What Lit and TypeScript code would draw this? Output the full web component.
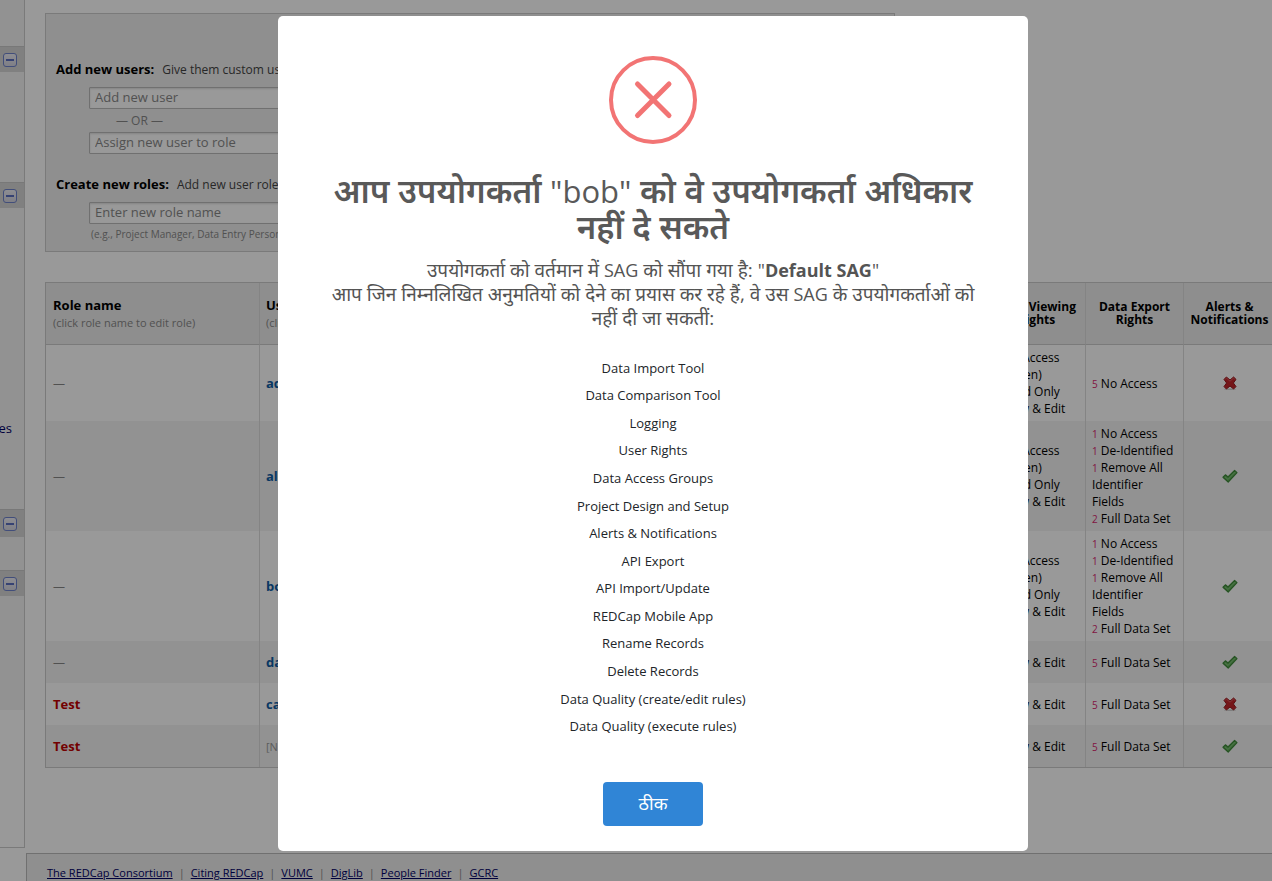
import { LitElement, html, css, svg, nothing } from "lit";
import { customElement, state } from "lit/decorators.js";

type Right = [count: number, label: string];

interface UserRow {
  role: string | null;
  user: string | null;
  viewing: Right[];
  exporting: Right[];
  alerts: boolean;
}

const MIXED_VIEW: Right[] = [
  [1, "No Access (Hidden)"],
  [1, "Read Only"],
  [3, "View & Edit"],
];
const FULL_VIEW: Right[] = [[5, "View & Edit"]];
const MIXED_EXPORT: Right[] = [
  [1, "No Access"],
  [1, "De-Identified"],
  [1, "Remove All Identifier Fields"],
  [2, "Full Data Set"],
];
const FULL_EXPORT: Right[] = [[5, "Full Data Set"]];

const ROWS: UserRow[] = [
  { role: null, user: "admin", viewing: MIXED_VIEW, exporting: [[5, "No Access"]], alerts: false },
  { role: null, user: "alice", viewing: MIXED_VIEW, exporting: MIXED_EXPORT, alerts: true },
  { role: null, user: "bob", viewing: MIXED_VIEW, exporting: MIXED_EXPORT, alerts: true },
  { role: null, user: "dave", viewing: FULL_VIEW, exporting: FULL_EXPORT, alerts: true },
  { role: "Test", user: "carol", viewing: FULL_VIEW, exporting: FULL_EXPORT, alerts: false },
  { role: "Test", user: null, viewing: FULL_VIEW, exporting: FULL_EXPORT, alerts: true },
];

const DENIED = [
  "Data Import Tool",
  "Data Comparison Tool",
  "Logging",
  "User Rights",
  "Data Access Groups",
  "Project Design and Setup",
  "Alerts & Notifications",
  "API Export",
  "API Import/Update",
  "REDCap Mobile App",
  "Rename Records",
  "Delete Records",
  "Data Quality (create/edit rules)",
  "Data Quality (execute rules)",
];

const LINKS = ["The REDCap Consortium", "Citing REDCap", "VUMC", "DigLib", "People Finder", "GCRC"];

const tick = svg`
  <path d="M1 9.2 L3.4 6.8 L6 9 L12.6 2.4 L15 4.6 L6.2 14 Z" fill="#63ad5c" stroke="#3f8a3a" stroke-width="1.2" stroke-linejoin="round"/>
  <path d="M3 9 L6 11.4 L13.4 3.8" fill="none" stroke="#80c579" stroke-width="1"/>`;
const cross = svg`
  <ellipse cx="8" cy="14.2" rx="6" ry="0.8" fill="#d0d0d0"/>
  <path d="M2 4.4 L4.4 2 L8 5 L11.6 2 L14 4.4 L11.4 8 L14 11.6 L11.6 14 L8 11 L4.4 14 L2 11.6 L4.6 8 Z" fill="#c4252b" stroke="#98191e" stroke-width="1" stroke-linejoin="round"/>
  <path d="M3.4 4.2 L4.6 3.2 L8 6.2 L11.4 3.2 L12.6 4.2" fill="none" stroke="#d95a5e" stroke-width="1"/>`;

@customElement("side-menu")
export class SideMenu extends LitElement {
  static styles = css`
    :host { display: flex; flex-direction: column; flex: none; width: 24px; border-right: 1px solid #ccc; border-bottom: 1px solid #ccc; }
    .items { background: #f3f3f3; font-size: 13px; line-height: 18px; display: flex; flex-direction: column; justify-content: center; align-items: flex-end; padding-right: 12px; }
    .items a { color: #000066; text-decoration: none; white-space: nowrap; }
    .first { height: 46px; }
    .second { height: 110px; }
    .third { height: 301px; box-sizing: border-box; padding-top: 138px; }
    .fourth { height: 33px; }
    .fifth { height: 114px; }
    .rest { height: 137px; }
    .head { height: 25px; border-top: 1px solid #c9c9c9; background: #d6d6d6; display: flex; align-items: center; padding-left: 3px; }
    .head.tall { height: 27px; }
    .toggle { width: 14px; height: 14px; padding: 0; border: 1px solid #6f83cc; border-radius: 3px; background: linear-gradient(#ececf4, #d4d4e0); display: flex; align-items: center; justify-content: center; }
    .bar { width: 8px; height: 2px; background: #5a6fc0; }
  `;
  private head(label: string, tall = false) {
    return html`<div class="head ${tall ? "tall" : ""}">
      <button class="toggle" aria-label=${label}><span class="bar"></span></button>
    </div>`;
  }
  render() {
    return html`
      <div class="items first"></div>
      ${this.head("Collapse project menu")}
      <div class="items second"></div>
      ${this.head("Collapse data collection menu")}
      <div class="items third"><a href="#apps">es</a></div>
      ${this.head("Collapse applications menu", true)}
      <div class="items fourth"></div>
      ${this.head("Collapse help menu")}
      <div class="items fifth"></div>
      <div class="rest"></div>
    `;
  }
}

@customElement("add-panel")
export class AddPanel extends LitElement {
  static styles = css`
    :host { display: flex; flex-direction: column; box-sizing: border-box; width: 850px; padding: 45px 10px 7px; border: 1px solid #ccc; background: #eee; font-size: 13px; line-height: 20px; }
    .line { display: flex; align-items: baseline; height: 20px; gap: 8px; color: #444; white-space: nowrap; }
    .line span { font-size: 12px; }
    label { font-weight: 700; color: #000; }
    .fields { display: flex; flex-direction: column; align-items: flex-start; padding-left: 33px; }
    .users { padding-top: 8px; padding-bottom: 20px; }
    .roles { padding-top: 8px; }
    input { box-sizing: border-box; width: 240px; height: 22px; padding: 0 5px 2px; border: 1px solid #bbb; border-radius: 1px; background: #fff; box-shadow: inset 0 1px 2px #ddd; font: inherit; color: #333; }
    input::placeholder { color: #888; opacity: 1; }
    .or { padding-left: 27px; line-height: 23px; font-size: 12px; color: #888; }
    .note { padding-left: 2px; font-size: 10px; color: #888; white-space: nowrap; }
  `;
  render() {
    return html`
      <div class="line"><label for="user">Add new users:</label><span>Give them custom user rights or assign them to a role.</span></div>
      <div class="fields users">
        <input id="user" placeholder="Add new user" />
        <span class="or">— OR —</span>
        <input aria-label="Assign new user to role" placeholder="Assign new user to role" />
      </div>
      <div class="line"><label for="role">Create new roles:</label><span>Add new user roles to which users may be assigned.</span></div>
      <div class="fields roles">
        <input id="role" placeholder="Enter new role name" />
        <span class="note">(e.g., Project Manager, Data Entry Person)</span>
      </div>
    `;
  }
}

@customElement("rights-table")
export class RightsTable extends LitElement {
  static styles = css`
    :host { display: block; }
    table { table-layout: fixed; width: 1320px; border-collapse: separate; border-spacing: 0; border: 1px solid #ccc; font-size: 12px; line-height: 17px; }
    .c-role { width: 214px; }
    .c-user { width: 728px; }
    .c-rights { width: 98px; }
    .c-alerts { width: 92px; }
    th, td { box-sizing: border-box; padding: 4px 6px; border-right: 1px solid #ddd; text-align: left; vertical-align: middle; }
    th { height: 62px; border-bottom: 1px solid #ccc; background: #ededed; line-height: 13px; padding: 0 6px; }
    th.wide { font-size: 13px; line-height: 18px; }
    th.mid, td.mid { text-align: center; padding-left: 0; padding-right: 0; }
    th.mid { padding-bottom: 2px; }
    .hint { display: block; font-size: 11px; font-weight: 400; color: #888; }
    td { height: 42px; }
    tbody tr:first-child td { height: 76px; }
    tbody tr:nth-child(even) td { background: #f3f3f3; }
    .role { padding-left: 7px; font-size: 13px; font-weight: 700; color: #c00000; }
    th.role { color: #000; }
    .dash { font-weight: 400; color: #888; font-size: 12px; }
    .user { font-size: 13px; font-weight: 700; color: #0f5ca3; text-decoration: none; }
    .none { font-size: 11px; color: #999; }
    .n { font-size: 10px; line-height: 10px; color: #d8286e; }
    svg { display: block; margin: 0 auto; }
  `;
  private rights(list: Right[]) {
    return list.map(([n, label]) => html`<div><span class="n">${n}</span> ${label}</div>`);
  }
  render() {
    return html`
      <table>
        <colgroup>
          <col class="c-role" /><col class="c-user" /><col class="c-rights" /><col class="c-rights" /><col class="c-alerts" /><col />
        </colgroup>
        <thead>
          <tr>
            <th class="wide role">Role name<span class="hint">(click role name to edit role)</span></th>
            <th class="wide">Username or users assigned to a role<span class="hint">(click username to edit)</span></th>
            <th class="mid">Data Viewing Rights</th>
            <th class="mid">Data Export Rights</th>
            <th class="mid">Alerts &amp; Notifications</th>
            <th></th>
          </tr>
        </thead>
        <tbody>
          ${ROWS.map(
            (r) => html`<tr>
              <td class="role">${r.role ?? html`<span class="dash">—</span>`}</td>
              <td>${r.user ? html`<a class="user" href="#${r.user}">${r.user}</a>` : html`<span class="none">[No users assigned]</span>`}</td>
              <td>${this.rights(r.viewing)}</td>
              <td>${this.rights(r.exporting)}</td>
              <td class="mid"><svg width="16" height="16" viewBox="0 0 16 16" role="img" aria-label=${r.alerts ? "Yes" : "No"}>${r.alerts ? tick : cross}</svg></td>
              <td></td>
            </tr>`
          )}
        </tbody>
      </table>
    `;
  }
}

@customElement("error-dialog")
export class ErrorDialog extends LitElement {
  static styles = css`
    :host { position: fixed; inset: 0; display: flex; justify-content: center; align-items: flex-start; padding: 16px 0 0 34px; background: rgba(0, 0, 0, 0.4); }
    .box { box-sizing: border-box; width: 750px; padding: 40px 46px 25px; border-radius: 5px; background: #fff; display: flex; flex-direction: column; align-items: center; text-align: center; color: #545454; }
    .mark { display: block; margin-bottom: 29px; }
    h2 { margin: 0 0 13px; font-size: 33px; line-height: 36px; font-weight: 600; color: #595959; }
    h2 .name { font-size: 31px; line-height: 31px; font-weight: 500; }
    p { margin: 0; font-size: 19px; line-height: 24px; }
    p .latin { font-size: 18px; line-height: 18px; }
    ul { list-style: none; margin: 24px 0 42px; padding: 0; min-height: 386px; display: grid; grid-auto-rows: 1fr; align-items: center; font-size: 13px; color: #212529; }
    .ok { width: 100px; height: 44px; padding: 0 0 2px; border: 0; border-radius: 4px; background: #3085d6; color: #fff; font: inherit; font-size: 18px; }
  `;
  render() {
    return html`
      <div class="box" role="alertdialog" aria-labelledby="title">
        <svg class="mark" width="88" height="88" viewBox="0 0 88 88" fill="none" stroke="#f27474" aria-hidden="true">
          <circle cx="44" cy="44" r="42" stroke-width="4" />
          <path d="M28.5 28 L60 59.5 M60 28 L28.5 59.5" stroke-width="5" stroke-linecap="round" />
        </svg>
        <h2 id="title">आप उपयोगकर्ता <span class="name">"bob"</span> को वे उपयोगकर्ता अधिकार नहीं दे सकते</h2>
        <p>उपयोगकर्ता को वर्तमान में <span class="latin">SAG</span> को सौंपा गया है: <span class="latin">"<b>Default SAG</b>"</span><br />आप जिन निम्नलिखित अनुमतियों को देने का प्रयास कर रहे हैं, वे उस <span class="latin">SAG</span> के उपयोगकर्ताओं को नहीं दी जा सकतीं:</p>
        <ul>${DENIED.map((d) => html`<li>${d}</li>`)}</ul>
        <button class="ok" @click=${() => this.dispatchEvent(new Event("dismiss"))}>ठीक</button>
      </div>
    `;
  }
}

@customElement("app-root")
export class AppRoot extends LitElement {
  static styles = css`
    :host { display: flex; align-items: flex-start; height: 100vh; overflow: hidden; background: #fff; color: #000; font-family: "Open Sans", "Noto Sans", "Noto Sans Devanagari", sans-serif; }
    main { flex: 1; min-width: 0; display: flex; flex-direction: column; }
    .content { display: flex; flex-direction: column; gap: 30px; padding: 13px 0 85px 20px; overflow: hidden; }
    footer { display: flex; margin-left: 1px; padding: 10px 20px; border: 1px solid #bbb; border-right: 0; background: #eee; font-size: 11px; line-height: 18px; color: #888; }
    footer a { color: #000066; }
    .sep { padding: 0 6px; }
  `;
  @state() private open = true;
  render() {
    return html`
      <side-menu></side-menu>
      <main>
        <div class="content">
          <add-panel></add-panel>
          <rights-table></rights-table>
        </div>
        <footer>
          ${LINKS.map((l, i) => html`${i ? html`<span class="sep">|</span>` : nothing}<a href="#">${l}</a>`)}
        </footer>
      </main>
      ${this.open ? html`<error-dialog @dismiss=${() => (this.open = false)}></error-dialog>` : nothing}
    `;
  }
}
